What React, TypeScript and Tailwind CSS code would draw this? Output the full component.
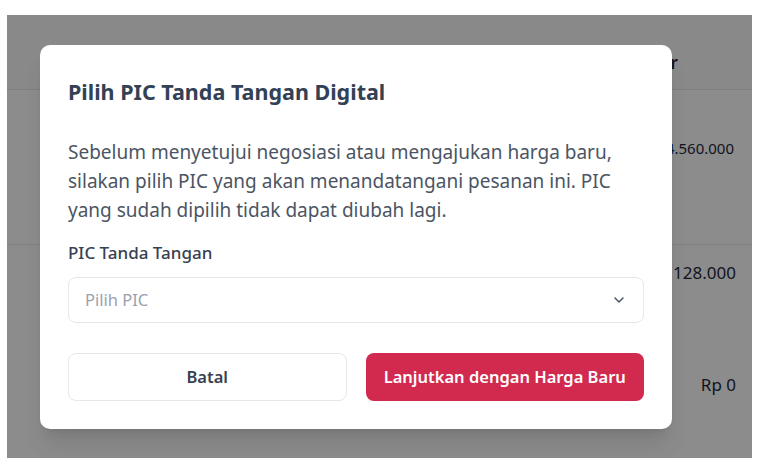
import { ChevronDown } from 'lucide-react'

function App() {
  return (
    <div
      className="h-[468px] w-[763px] bg-white pb-[10px] pl-[7px] pr-[11px] pt-[15px]"
      style={{ fontFamily: '"Noto Sans", "Open Sans", sans-serif' }}
    >
      <div className="relative h-full w-full overflow-hidden bg-white">
        {/* tabel di belakang modal */}
        <div className="flex h-[75px] items-start justify-end border-b border-gray-200 bg-gray-50 pr-[74px] pt-[35px] text-[17px] font-semibold text-gray-800">
          Bayar
        </div>
        <div className="flex h-[155px] items-start justify-end border-b border-gray-200 pr-[18px] pt-[47px] text-[15px] text-gray-800">
          Rp 4.560.000
        </div>
        <div className="flex h-[110px] items-start justify-end pr-[16px] pt-[15px] text-[17px] text-gray-800">
          Rp 128.000
        </div>
        <div className="flex items-start justify-end pr-[16px] pt-[17px] text-[17px] text-gray-800">
          Rp 0
        </div>

        <div className="absolute inset-0 bg-black/45" />

        <div className="absolute left-[33px] top-[30px] w-[632px] rounded-[10px] bg-white px-[28px] pb-[28px] pt-[33px] shadow-xl">
          <h2 className="text-[21.5px] font-bold leading-[28px] text-[#334155]">
            Pilih PIC Tanda Tangan Digital
          </h2>
          <p className="mt-[32px] text-[19px] leading-[29px] text-[#4b5563]">
            Sebelum menyetujui negosiasi atau mengajukan harga baru, silakan pilih PIC yang akan
            menandatangani pesanan ini. PIC yang sudah dipilih tidak dapat diubah lagi.
          </p>
          <label className="mt-[18px] block text-[17px] font-medium leading-[20px] text-[#374151]">
            PIC Tanda Tangan
          </label>
          <button className="mt-[14px] flex h-[46px] w-full items-center justify-between rounded-[8px] border border-gray-200 pl-[16px] pr-[16px] text-[16.5px] text-gray-400">
            <span>Pilih PIC</span>
            <ChevronDown size={16} strokeWidth={2.25} className="text-gray-600" />
          </button>
          <div className="mt-[30px] grid grid-cols-2 gap-[19px]">
            <button className="h-[48px] rounded-[8px] border border-gray-200 bg-white text-[16.5px] font-semibold text-[#374151]">
              Batal
            </button>
            <button className="h-[48px] rounded-[8px] bg-[#d22a4f] text-[16.5px] font-semibold text-white">
              Lanjutkan dengan Harga Baru
            </button>
          </div>
        </div>
      </div>
    </div>
  )
}

export default App
